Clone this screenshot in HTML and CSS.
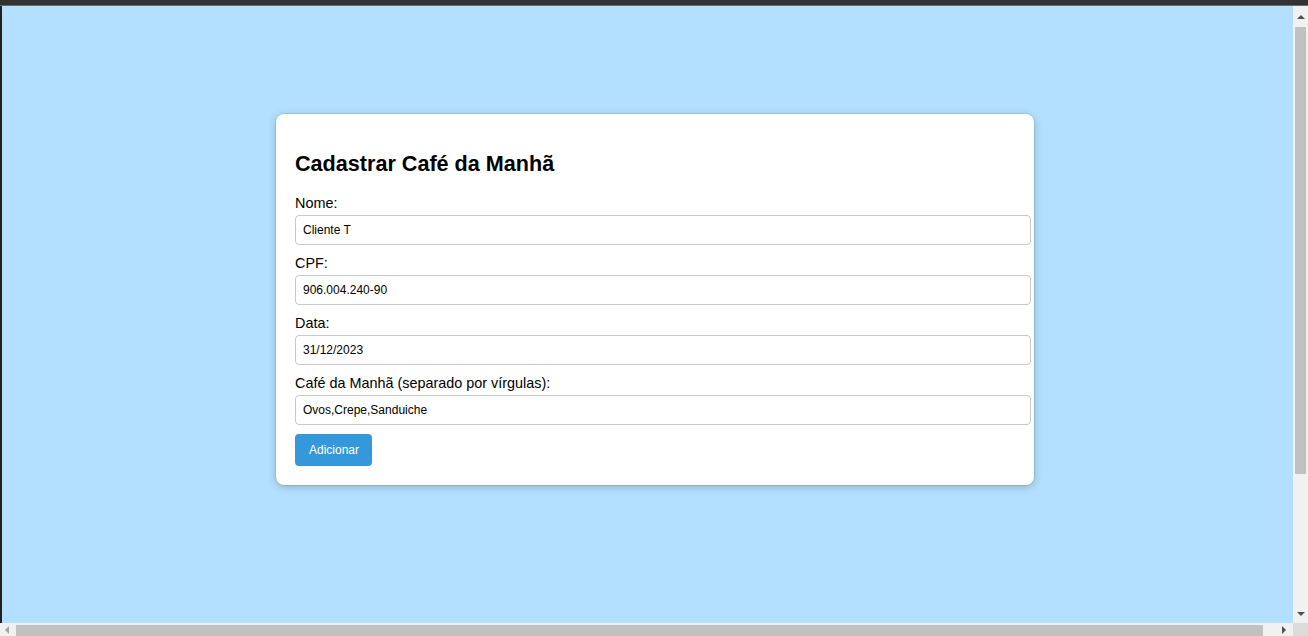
FILE: index.html
```html
<!DOCTYPE html>
<html lang="pt-BR">
<head>
<meta charset="utf-8">
<title>Cadastrar Café da Manhã</title>
<link rel="stylesheet" href="styles.css">
</head>
<body>
<div class="frame">
  <div class="topbar"></div>
  <div class="middle">
    <div class="leftstrip"></div>
    <main class="view">
      <form class="card">
        <h2 class="title">Cadastrar Café da Manhã</h2>
        <label class="label">Nome:</label>
        <input class="field" type="text" value="Cliente T">
        <label class="label">CPF:</label>
        <input class="field" type="text" value="906.004.240-90">
        <label class="label">Data:</label>
        <input class="field" type="text" value="31/12/2023">
        <label class="label">Café da Manhã (separado por vírgulas):</label>
        <input class="field" type="text" value="Ovos,Crepe,Sanduiche">
        <button class="btn" type="button">Adicionar</button>
      </form>
    </main>
    <div class="vscroll">
      <span class="arrow arrow-up"></span>
      <span class="vthumb"></span>
      <span class="arrow arrow-down"></span>
    </div>
  </div>
  <div class="bottom">
    <div class="hscroll">
      <span class="arrow arrow-left"></span>
      <span class="hthumb"></span>
      <span class="arrow arrow-right"></span>
    </div>
    <div class="corner"></div>
  </div>
</div>
</body>
</html>
```

FILE: styles.css
```css
html, body {
  margin: 0;
  padding: 0;
  overflow: hidden;
}
body {
  font-family: "Liberation Sans", Arial, sans-serif;
}
.frame {
  width: 1308px;
  height: 636px;
  display: flex;
  flex-direction: column;
}
.topbar {
  height: 5px;
  background: #323232;
  border-bottom: 1px solid #6a6a6a;
  flex: none;
}
.middle {
  flex: 1;
  display: flex;
  min-height: 0;
}
.leftstrip {
  width: 2px;
  background: #1f2224;
  flex: none;
}
.view {
  flex: 1;
  background: #b3e0ff;
  padding: 108px 0 0 274px;
  overflow: hidden;
}
.card {
  width: 720px;
  background: #fff;
  padding: 21px 19px 19px;
  border-radius: 8px;
  box-shadow: 0 0 0 1px rgba(0, 0, 0, 0.08), 0 2px 8px rgba(0, 0, 0, 0.22);
}
.title {
  margin: 16px 0 18px;
  font-size: 21.6px;
  font-weight: bold;
  color: #000;
  line-height: 25px;
}
.label {
  display: block;
  font-size: 14.4px;
  line-height: 17px;
  padding-top: 1px;
  margin-bottom: 3px;
  color: #000;
}
.field {
  display: block;
  width: 100%;
  padding: 7px 7px;
  font-family: "Liberation Sans", Arial, sans-serif;
  font-size: 12px;
  line-height: 14px;
  border: 1px solid #c8c8c8;
  border-radius: 4px;
  margin: 0 0 9px;
  color: #000;
  background: #fff;
}
.btn {
  display: block;
  background: #3498db;
  color: #fff;
  border: none;
  border-radius: 4px;
  font-family: "Liberation Sans", Arial, sans-serif;
  font-size: 12px;
  line-height: 14px;
  padding: 9px 13px 9px 14px;
  cursor: pointer;
}
.vscroll {
  width: 15px;
  flex: none;
  background: #f1f1f1;
  display: flex;
  flex-direction: column;
  align-items: center;
  padding: 9px 0 7px;
  box-sizing: border-box;
}
.vthumb {
  width: 11px;
  height: 447px;
  background: #c1c1c1;
  margin: 8px 0 0;
}
.arrow-down {
  margin-top: auto;
}
.bottom {
  height: 13px;
  flex: none;
  display: flex;
}
.hscroll {
  flex: 1;
  background: #f1f1f1;
  display: flex;
  align-items: center;
  padding: 0 7px 0 5px;
}
.hthumb {
  width: 1247px;
  height: 11px;
  align-self: flex-end;
  background: #c1c1c1;
  margin-left: 7px;
}
.arrow-right {
  margin-left: auto;
}
.corner {
  width: 15px;
  background: #dcdcdc;
}
.arrow {
  display: block;
  width: 0;
  height: 0;
}
.arrow-up {
  border-left: 4px solid transparent;
  border-right: 4px solid transparent;
  border-bottom: 4px solid #505050;
}
.arrow-down {
  border-left: 4px solid transparent;
  border-right: 4px solid transparent;
  border-top: 4px solid #505050;
}
.arrow-left {
  border-top: 4px solid transparent;
  border-bottom: 4px solid transparent;
  border-right: 4px solid #a3a3a3;
}
.arrow-right {
  border-top: 4px solid transparent;
  border-bottom: 4px solid transparent;
  border-left: 4px solid #505050;
}
```
